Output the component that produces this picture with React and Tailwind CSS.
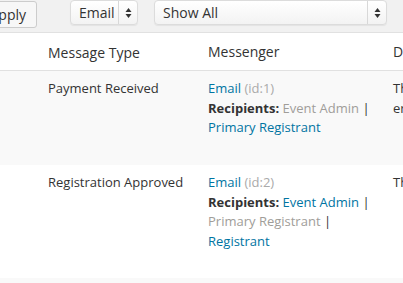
import React from 'react';

function Arrows() {
  return (
    <svg width="7" height="12" viewBox="0 0 7 12" className="block">
      <path d="M3.5 1 L6.5 5 L0.5 5 Z" fill="#333" />
      <path d="M3.5 11 L6.5 7 L0.5 7 Z" fill="#333" />
    </svg>
  );
}

function Select({ label, className }) {
  return (
    <div className={`flex h-[25px] items-stretch rounded-[4px] border border-[#dcdcdc] bg-gradient-to-b from-white to-[#f3f3f3] shadow-[0_1px_1px_rgba(0,0,0,0.06)] ${className}`}>
      <div className="flex flex-1 items-center pl-[8px] text-[14px] text-[#333]">{label}</div>
      <div className="flex w-[19px] items-center justify-center border-l border-[#d8d8d8]">
        <Arrows />
      </div>
    </div>
  );
}

function Cell({ children, className = '' }) {
  return <div className={`text-[13px] leading-[19.5px] text-[#333] ${className}`}>{children}</div>;
}

const rows = [
  {
    type: 'Payment Received',
    id: 1,
    height: 'h-[94px]',
    bg: 'bg-[#f9f9f9]',
    recipients: [
      { name: 'Event Admin', active: false },
      { name: 'Primary Registrant', active: true },
    ],
    desc: ['Th', 'er'],
  },
  {
    type: 'Registration Approved',
    id: 2,
    height: 'h-[113px]',
    bg: 'bg-white',
    recipients: [
      { name: 'Event Admin', active: true },
      { name: 'Primary Registrant', active: false },
      { name: 'Registrant', active: true },
    ],
    desc: ['Th'],
  },
];

export default function App() {
  return (
    <div className="h-[283px] w-[403px] overflow-hidden bg-white" style={{ fontFamily: '"Open Sans", "Noto Sans", sans-serif' }}>
      {/* filter bar */}
      <div className="flex h-[33px] items-start border-b border-[#e1e1e1] bg-[#f1f1f1]">
        <div className="ml-[-12px] mt-[1px] flex h-[27px] w-[49px] items-center justify-end rounded-[3px] border border-[#cccccc] bg-[#f7f7f7] pr-[10px] text-[14px] text-[#333]">
          Apply
        </div>
        <Select label="Email" className="ml-[33px] w-[68px]" />
        <Select label="Show All" className="ml-[16px] w-[233px]" />
      </div>

      {/* header */}
      <div className="grid h-[38px] grid-cols-[208px_185px_1fr] items-center border-b border-[#e1e1e1] text-[14px] text-[#333]">
        <div className="pl-[48px] pt-[2px]">Message Type</div>
        <div>Messenger</div>
        <div>D</div>
      </div>

      {rows.map((r) => (
        <div key={r.id} className={`grid grid-cols-[208px_185px_1fr] pt-[8px] ${r.height} ${r.bg}`}>
          <Cell className="pl-[48px]">{r.type}</Cell>
          <Cell>
            <div>
              <span className="text-[#0074a2]">Email</span>{' '}
              <span className="text-[#aaaaaa]">(id:{r.id})</span>
            </div>
            <div>
              <span className="font-bold">Recipients:</span>{' '}
              {r.recipients.map((p, i) => (
                <React.Fragment key={p.name}>
                  <span className={p.active ? 'text-[#0074a2]' : 'text-[#a09d99]'}>{p.name}</span>
                  {i < r.recipients.length - 1 && ' | '}
                </React.Fragment>
              ))}
            </div>
          </Cell>
          <Cell className="whitespace-nowrap">
            {r.desc.map((d) => (
              <div key={d}>{d}</div>
            ))}
          </Cell>
        </div>
      ))}
      <div className="h-[20px] bg-[#f9f9f9]" />
    </div>
  );
}
